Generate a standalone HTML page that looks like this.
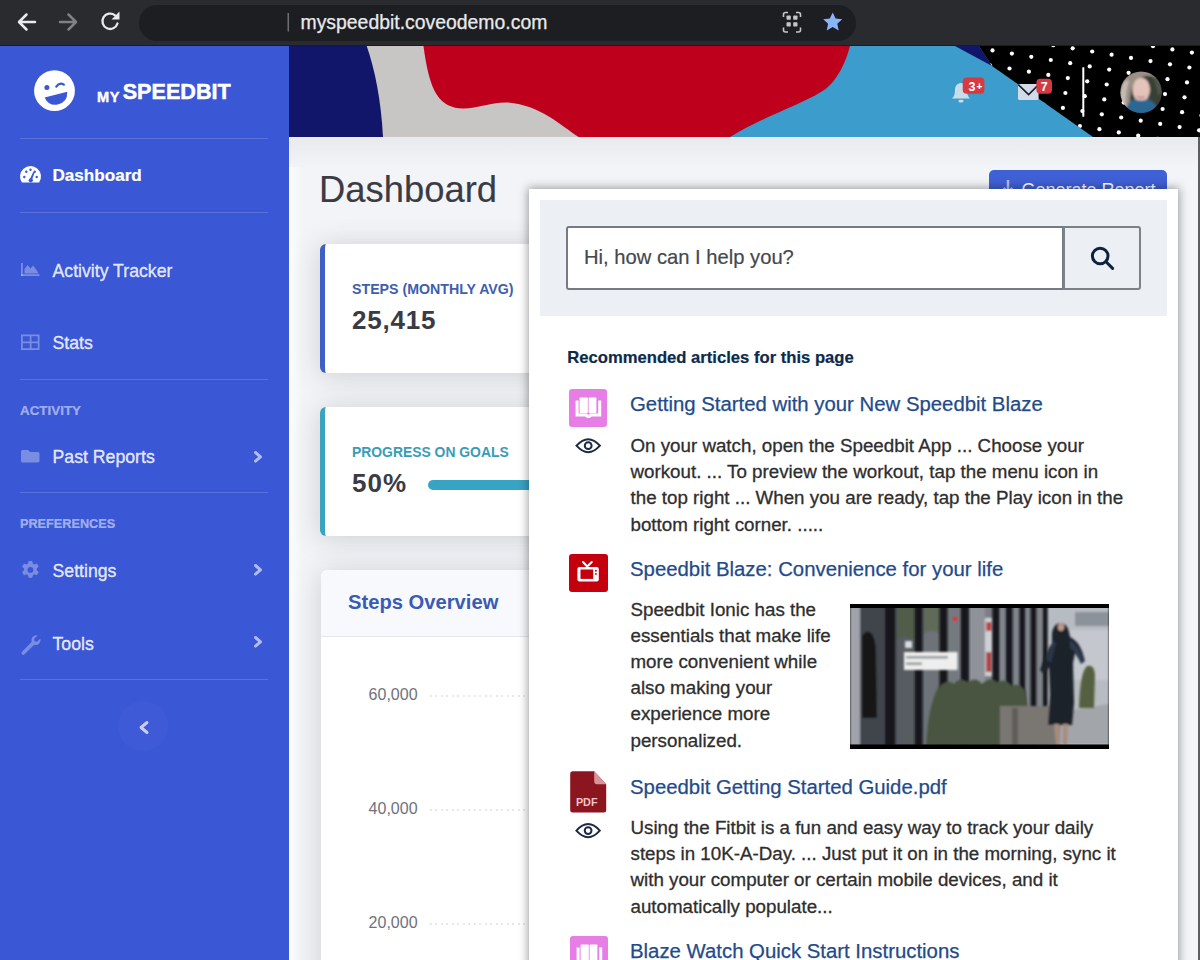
<!DOCTYPE html>
<html><head><meta charset="utf-8">
<style>
*{margin:0;padding:0;box-sizing:border-box}
html,body{width:1200px;height:960px;overflow:hidden;background:#f3f4f7;font-family:"Liberation Sans",sans-serif}
.a{position:absolute}
.t{position:absolute;white-space:nowrap;line-height:1}
#chrome{left:0;top:0;width:1200px;height:46px;background:#2a2b2e}
#pill{left:139px;top:4.5px;width:717px;height:36px;border-radius:18px;background:#1d1e21}
#side{left:0;top:46px;width:289px;height:914px;background:#3a57d6}
.div{position:absolute;left:20px;width:248px;height:1px;background:rgba(255,255,255,0.16)}
.nav{color:rgba(255,255,255,0.84);font-size:17.7px;-webkit-text-stroke:0.35px rgba(255,255,255,0.84)}
.sec{color:rgba(255,255,255,0.5);font-size:13px;font-weight:700;-webkit-text-stroke:0.2px rgba(255,255,255,0.5)}
.ic{position:absolute;fill:rgba(255,255,255,0.32)}
.chev{position:absolute;fill:none;stroke:rgba(255,255,255,0.55);stroke-width:2.6;stroke-linecap:round;stroke-linejoin:round}

.card{background:#fff;border-left:5px solid;border-radius:6px;box-shadow:0 2.4px 28px rgba(58,59,69,0.2)}
.axl{font-size:16px;color:#6f717d;margin-top:1px}
.dots{left:430px;width:110px;height:2px;background:repeating-linear-gradient(90deg,#e6e8ed 0 2px,transparent 2px 5.5px)}

.ttl{font-size:20.35px;color:#1f4b8a;-webkit-text-stroke:0.25px #1f4b8a}
.body{font-size:18.75px;line-height:26.2px;color:#2e2e2e;white-space:nowrap;-webkit-text-stroke:0.3px #2e2e2e}
</style></head><body>
<!-- browser chrome -->
<div id="chrome" class="a"></div>
<div id="pill" class="a"></div>
<div class="a" style="left:0;top:45px;width:1200px;height:1px;background:#1b1c22"></div>
<svg class="a" style="left:0;top:0" width="300" height="46" viewBox="0 0 300 46">
  <g fill="none" stroke="#e8eaed" stroke-width="2.5" stroke-linecap="round" stroke-linejoin="round">
    <path d="M35 22H19.5M26.5 14.5L19 22l7.5 7.5"/>
  </g>
  <g fill="none" stroke="#808184" stroke-width="2.5" stroke-linecap="round" stroke-linejoin="round">
    <path d="M60 22H75.5M68.5 14.5L76 22l-7.5 7.5"/>
  </g>
  <g fill="none" stroke="#e8eaed" stroke-width="2.3" stroke-linecap="round">
    <path d="M117.5 23.5A7.7 7.7 0 1 1 115 15.3"/>
  </g>
  <path d="M119.5 11.5v8h-8z" fill="#e8eaed"/>
  <rect x="287.5" y="13" width="1.5" height="18.5" fill="#6d6e71"/>
</svg>
<div class="t" style="left:300.5px;top:13px;font-size:19.4px;color:#e8eaed;-webkit-text-stroke:0.25px #e8eaed">myspeedbit.coveodemo.com</div>
<svg class="a" style="left:775px;top:5px" width="80" height="35" viewBox="775 5 80 35">
  <g fill="none" stroke="#c4c6c9" stroke-width="1.6">
    <path d="M783.5 17v-2.5a2 2 0 0 1 2-2h2.5M796 12.5h2.5a2 2 0 0 1 2 2V17M800.5 27.5V30a2 2 0 0 1-2 2H796M788 32h-2.5a2 2 0 0 1-2-2v-2.5"/>
  </g>
  <g fill="#c4c6c9"><rect x="786.5" y="15.5" width="4.3" height="4.3" rx="0.8"/><rect x="793.2" y="15.5" width="4.3" height="4.3" rx="0.8"/><rect x="786.5" y="22.2" width="4.3" height="4.3" rx="0.8"/><rect x="793.2" y="22.2" width="4.3" height="4.3" rx="0.8"/></g>
  <path d="M832.7 12.5l2.9 6.1 6.6.7-4.9 4.5 1.4 6.6-6-3.4-6 3.4 1.4-6.6-4.9-4.5 6.6-.7z" fill="#8ab4f8"/>
</svg>

<!-- sidebar -->
<div id="side" class="a"></div>
<svg class="a" style="left:30px;top:66px" width="50" height="50" viewBox="30 66 50 50">
  <circle cx="54.5" cy="90.7" r="20.4" fill="#fff"/>
  <circle cx="46.9" cy="87.6" r="2.5" fill="#3a57d6"/>
  <path d="M56.3 86.6Q59.8 82 63.8 84.6" fill="none" stroke="#3a57d6" stroke-width="2.3" stroke-linecap="round"/>
  <path d="M44.6 97.4L67.3 91.7Q67.6 102.5 57.5 104.6Q48.5 106 44.6 97.4z" fill="#3a57d6"/>
</svg>
<div class="t" style="left:97px;top:90px;font-size:14.6px;font-weight:700;color:#fff;letter-spacing:0.6px;-webkit-text-stroke:0.4px #fff">MY</div>
<div class="t" style="left:122.7px;top:80.7px;font-size:21.6px;font-weight:700;color:#fff;-webkit-text-stroke:0.5px #fff">SPEEDBIT</div>
<div class="div" style="top:137.5px"></div>
<div class="t" style="left:52.5px;top:167.25px;font-size:17.1px;font-weight:700;color:#fff;-webkit-text-stroke:0.2px #fff">Dashboard</div>
<div class="div" style="top:211.5px"></div>
<div class="t nav" style="left:52.5px;top:263.0px">Activity Tracker</div>
<div class="t nav" style="left:52.5px;top:335.0px">Stats</div>
<div class="div" style="top:378.5px"></div>
<div class="t sec" style="left:20px;top:404px;font-size:13.4px">ACTIVITY</div>
<div class="t nav" style="left:52.5px;top:449.0px">Past Reports</div>
<div class="div" style="top:492px"></div>
<div class="t sec" style="left:20px;top:518px;font-size:12.7px">PREFERENCES</div>
<div class="t nav" style="left:52.5px;top:563.0px">Settings</div>
<div class="t nav" style="left:52.5px;top:635.5px">Tools</div>
<div class="div" style="top:679px"></div>
<div class="a" style="left:117.5px;top:701px;width:50px;height:50px;border-radius:25px;background:rgba(255,255,255,0.025)"></div>
<svg class="a" style="left:0;top:150px" width="289" height="600" viewBox="0 150 289 600">
  <!-- dashboard gauge -->
  <path d="M21.9 182.5A10.5 10.5 0 1 1 39.1 182.5z" fill="#fff"/>
  <g fill="#3a57d6"><circle cx="24.3" cy="177" r="1.2"/><circle cx="26.3" cy="171.8" r="1.2"/><circle cx="36.7" cy="177" r="1.2"/><circle cx="30.5" cy="169.8" r="1.2"/><circle cx="34.7" cy="171.8" r="1.2"/><path d="M29.6 179.8l3.6-7.8 1.5.6-3 8z"/><circle cx="30.8" cy="180.3" r="2.1"/></g>
  <!-- activity area chart -->
  <g fill="rgba(255,255,255,0.32)"><rect x="21" y="263" width="1.8" height="13"/><rect x="21" y="274.2" width="18.5" height="1.8"/><path d="M24.5 273.5v-4.5l3-4 3 3.5 2.5-3 3.5 4.5 2 3.5z"/></g>
  <!-- stats table -->
  <g fill="rgba(255,255,255,0.32)"><path d="M21 334.5h18.5v15.5H21zM22.8 336.3v5.2h6.9v-5.2zm8.7 0v5.2h6.2v-5.2zm-8.7 7v5h6.9v-5zm8.7 0v5h6.2v-5z" fill-rule="evenodd"/></g>
  <!-- folder -->
  <path d="M21 451.5a1.5 1.5 0 0 1 1.5-1.5h5.5l2 2h8a1.5 1.5 0 0 1 1.5 1.5v7.5a1.5 1.5 0 0 1-1.5 1.5h-15.5a1.5 1.5 0 0 1-1.5-1.5z" fill="rgba(255,255,255,0.32)"/>
  <!-- gear -->
  <g transform="translate(30.4 569.9)" fill="rgba(255,255,255,0.32)">
    <path fill-rule="evenodd" d="M-1.8-8.9h3.6l.6 2.6 1.6.9 2.5-.9 1.8 3.1-2 1.8v1.8l2 1.8-1.8 3.1-2.5-.9-1.6.9-.6 2.6h-3.6l-.6-2.6-1.6-.9-2.5.9-1.8-3.1 2-1.8v-1.8l-2-1.8 1.8-3.1 2.5.9 1.6-.9zM0-2.9a2.9 2.9 0 1 0 0 5.8a2.9 2.9 0 1 0 0-5.8z"/>
  </g>
  <!-- wrench -->
  <path d="M37.5 635.5l-3.3 3.3.4 2.5 2.5.4 3.3-3.3a5 5 0 0 1-6.2 6.3l-9.6 9.6a1.8 1.8 0 0 1-2.6-2.6l9.6-9.6a5 5 0 0 1 5.9-6.6z" fill="rgba(255,255,255,0.32)"/>
  <!-- chevrons -->
  <g fill="none" stroke="rgba(255,255,255,0.6)" stroke-width="3" stroke-linecap="round" stroke-linejoin="round">
    <path d="M255.5 452.5l5 4.3-5 4.3M255.5 565.5l5 4.3-5 4.3M255.5 637.5l5 4.3-5 4.3"/>
    <path d="M147 722.5l-6 5 6 5" stroke="rgba(255,255,255,0.7)"/>
  </g>
</svg>

<!-- banner -->
<svg class="a" style="left:289px;top:46px" width="911" height="91" viewBox="0 0 911 91">
  <rect width="911" height="91" fill="#c8c5c5"/>
  <rect x="400" width="511" height="91" fill="#3c9ccb"/>
  <path d="M0 0H77.7C86 24 92 54 94 91H0z" fill="#12166a"/>
  <path d="M134.5 0H561C556 19 546 39 531 46.5C511 59 471 72 441 91H289.7C271 79 251 59 218.5 56.5C201 56 190 62.5 174 62.5C163 62.5 154 58 148 49C141 39 137 19 134.5 0z" fill="#bf001d"/>
  <path d="M666 0H690L703 20Z" fill="#12166a"/>
  <defs><clipPath id="bk"><path d="M690 0H911V91H804L703 20z"/></clipPath></defs>
  <path d="M690 0H911V91H804L703 20z" fill="#000"/>
  <g clip-path="url(#bk)" fill="#fff"><circle cx="664.5" cy="-2.0" r="2.1"/><circle cx="662.1" cy="12.9" r="2.1"/><circle cx="659.6" cy="27.8" r="2.1"/><circle cx="657.2" cy="42.7" r="2.1"/><circle cx="654.8" cy="57.6" r="2.1"/><circle cx="652.3" cy="72.5" r="2.1"/><circle cx="684.0" cy="1.2" r="2.1"/><circle cx="681.6" cy="16.1" r="2.1"/><circle cx="679.1" cy="31.0" r="2.1"/><circle cx="676.7" cy="45.9" r="2.1"/><circle cx="674.2" cy="60.8" r="2.1"/><circle cx="671.8" cy="75.7" r="2.1"/><circle cx="669.3" cy="90.6" r="2.1"/><circle cx="703.5" cy="4.4" r="2.1"/><circle cx="701.0" cy="19.3" r="2.1"/><circle cx="698.6" cy="34.2" r="2.1"/><circle cx="696.1" cy="49.1" r="2.1"/><circle cx="693.7" cy="64.0" r="2.1"/><circle cx="691.2" cy="78.9" r="2.1"/><circle cx="688.8" cy="93.8" r="2.1"/><circle cx="722.9" cy="7.6" r="2.1"/><circle cx="720.5" cy="22.5" r="2.1"/><circle cx="718.0" cy="37.4" r="2.1"/><circle cx="715.6" cy="52.3" r="2.1"/><circle cx="713.1" cy="67.2" r="2.1"/><circle cx="710.6" cy="82.1" r="2.1"/><circle cx="744.8" cy="-4.1" r="2.1"/><circle cx="742.3" cy="10.8" r="2.1"/><circle cx="739.9" cy="25.7" r="2.1"/><circle cx="737.5" cy="40.6" r="2.1"/><circle cx="735.0" cy="55.5" r="2.1"/><circle cx="732.5" cy="70.4" r="2.1"/><circle cx="730.1" cy="85.3" r="2.1"/><circle cx="764.2" cy="-0.9" r="2.1"/><circle cx="761.8" cy="14.0" r="2.1"/><circle cx="759.3" cy="28.9" r="2.1"/><circle cx="756.9" cy="43.8" r="2.1"/><circle cx="754.5" cy="58.7" r="2.1"/><circle cx="752.0" cy="73.6" r="2.1"/><circle cx="749.5" cy="88.5" r="2.1"/><circle cx="783.7" cy="2.3" r="2.1"/><circle cx="781.2" cy="17.2" r="2.1"/><circle cx="778.8" cy="32.1" r="2.1"/><circle cx="776.4" cy="47.0" r="2.1"/><circle cx="773.9" cy="61.9" r="2.1"/><circle cx="771.5" cy="76.8" r="2.1"/><circle cx="769.0" cy="91.7" r="2.1"/><circle cx="803.2" cy="5.5" r="2.1"/><circle cx="800.7" cy="20.4" r="2.1"/><circle cx="798.2" cy="35.3" r="2.1"/><circle cx="795.8" cy="50.2" r="2.1"/><circle cx="793.4" cy="65.1" r="2.1"/><circle cx="790.9" cy="80.0" r="2.1"/><circle cx="788.5" cy="94.9" r="2.1"/><circle cx="822.6" cy="8.7" r="2.1"/><circle cx="820.2" cy="23.6" r="2.1"/><circle cx="817.7" cy="38.5" r="2.1"/><circle cx="815.3" cy="53.4" r="2.1"/><circle cx="812.8" cy="68.3" r="2.1"/><circle cx="810.4" cy="83.2" r="2.1"/><circle cx="844.5" cy="-3.0" r="2.1"/><circle cx="842.0" cy="11.9" r="2.1"/><circle cx="839.6" cy="26.8" r="2.1"/><circle cx="837.1" cy="41.7" r="2.1"/><circle cx="834.7" cy="56.6" r="2.1"/><circle cx="832.2" cy="71.5" r="2.1"/><circle cx="829.8" cy="86.4" r="2.1"/><circle cx="864.0" cy="0.2" r="2.1"/><circle cx="861.5" cy="15.1" r="2.1"/><circle cx="859.0" cy="30.0" r="2.1"/><circle cx="856.6" cy="44.9" r="2.1"/><circle cx="854.2" cy="59.8" r="2.1"/><circle cx="851.7" cy="74.7" r="2.1"/><circle cx="849.2" cy="89.6" r="2.1"/><circle cx="883.4" cy="3.4" r="2.1"/><circle cx="881.0" cy="18.3" r="2.1"/><circle cx="878.5" cy="33.2" r="2.1"/><circle cx="876.0" cy="48.1" r="2.1"/><circle cx="873.6" cy="63.0" r="2.1"/><circle cx="871.2" cy="77.9" r="2.1"/><circle cx="868.7" cy="92.8" r="2.1"/><circle cx="902.9" cy="6.6" r="2.1"/><circle cx="900.4" cy="21.5" r="2.1"/><circle cx="898.0" cy="36.4" r="2.1"/><circle cx="895.5" cy="51.3" r="2.1"/><circle cx="893.1" cy="66.2" r="2.1"/><circle cx="890.6" cy="81.1" r="2.1"/><circle cx="915.0" cy="54.5" r="2.1"/><circle cx="912.5" cy="69.4" r="2.1"/><circle cx="910.1" cy="84.3" r="2.1"/></g>
  <rect x="793.3" y="21.3" width="2" height="49.4" fill="#fff"/>
</svg>


<!-- banner icons -->
<svg class="a" style="left:940px;top:70px" width="240" height="45" viewBox="940 70 240 45">
  <defs>
    <clipPath id="av"><circle cx="1141.1" cy="92.2" r="20.8"/></clipPath><filter id="avb" x="-10%" y="-10%" width="120%" height="120%"><feGaussianBlur stdDeviation="0.9"/></filter>
    <radialGradient id="face" cx="0.5" cy="0.45" r="0.5"><stop offset="0" stop-color="#e7b9a6"/><stop offset="1" stop-color="#c79a88"/></radialGradient>
  </defs>
  <!-- bell -->
  <path d="M952 98.5h18c-2.5-2-3-5-3-9.5a6 6 0 0 0-12 0c0 4.5-.5 7.5-3 9.5z" fill="#c9dde9"/>
  <rect x="958.5" y="99.8" width="5" height="2.6" rx="1.3" fill="#c9dde9"/>
  <rect x="962.7" y="77.6" width="21.7" height="16.2" rx="4" fill="#d63a40"/>
  <text x="968.5" y="90.5" font-family="Liberation Sans" font-weight="700" font-size="12.5" fill="#fff">3</text><text x="976.5" y="89.5" font-family="Liberation Sans" font-weight="700" font-size="10" fill="#fff">+</text>
  <!-- envelope -->
  <rect x="1018" y="84" width="20.6" height="16" rx="1.5" fill="#d3dbe7"/>
  <path d="M1018.3 84.6L1028.6 94.6L1038.6 84.6" fill="none" stroke="#1a1d2e" stroke-width="1.6"/>
  <rect x="1036.4" y="78.7" width="15.6" height="15.1" rx="4" fill="#d63a40"/>
  <text x="1044.2" y="90.8" font-family="Liberation Sans" font-weight="700" font-size="12.5" fill="#fff" text-anchor="middle">7</text>
  <!-- avatar -->
  <g clip-path="url(#av)">
    <g filter="url(#avb)">
    <rect x="1118" y="70" width="46" height="45" fill="#394036"/>
    <path d="M1153 72q8 6 9 20l-4 3q-2-14-6-18z" fill="#4f574a"/>
    <path d="M1119 112q-2-24 6-34q8-9 19-8q9 1 13 8q-6-3-12-2q-9 2-13 12q-3 10-2 24z" fill="#9b8f86"/>
    <path d="M1120 108q-1-18 4-26q3-3 5-1q-4 12-3 27z" fill="#c4bbb3"/>
    <ellipse cx="1141.2" cy="89.8" rx="8.8" ry="12" fill="#e4c4ba"/>
    <path d="M1137 96.5q3.8 2.2 7.6 0" stroke="#c7817e" stroke-width="1.6" fill="none"/>
    <path d="M1124 116q2-13 10-17q7 3 14 0q9 4 12 17z" fill="#2b6893"/>
    </g>
  </g>
</svg>

<!-- main content -->
<div class="a" style="left:289px;top:137px;width:14px;height:823px;background:linear-gradient(90deg,rgba(255,255,255,0.75),rgba(255,255,255,0))"></div>
<div class="a" style="left:289px;top:137px;width:911px;height:30px;background:linear-gradient(#e9eaee,#f3f4f7)"></div>
<div class="t" style="left:319px;top:171.7px;font-size:36.4px;color:#3a3b45;-webkit-text-stroke:0.12px #3a3b45">Dashboard</div>
<div class="a" style="left:989px;top:170px;width:178px;height:40px;border-radius:5px;background:#4060d6"></div>
<div class="t" style="left:1021.5px;top:180.5px;font-size:18px;color:#fff">Generate Report</div>
<svg class="a" style="left:1000px;top:178px" width="16" height="20"><path d="M8 2v12M3.5 10l4.5 4.5 4.5-4.5" stroke="rgba(255,255,255,0.6)" stroke-width="2.5" fill="none"/></svg>

<div class="a card" style="left:320px;top:243.5px;width:260px;height:129.5px;border-left-color:#3f5fc4"></div>
<div class="t" style="left:352px;top:282.3px;font-size:14.2px;font-weight:700;color:#3f5eb0">STEPS (MONTHLY AVG)</div>
<div class="t" style="left:352px;top:307px;font-size:26px;font-weight:700;color:#3a3b45;letter-spacing:0.8px">25,415</div>

<div class="a card" style="left:320px;top:407px;width:260px;height:129px;border-left-color:#3aa3bf"></div>
<div class="t" style="left:352px;top:445.6px;font-size:13.9px;font-weight:700;color:#3a9cb6">PROGRESS ON GOALS</div>
<div class="t" style="left:352px;top:470px;font-size:26px;font-weight:700;color:#3a3b45;letter-spacing:1px">50%</div>
<div class="a" style="left:428px;top:480px;width:140px;height:9.5px;border-radius:5px;background:#38a4c4"></div>

<div class="a" style="left:321px;top:570px;width:260px;height:420px;border-radius:6px;background:#fff;box-shadow:0 2.4px 28px rgba(58,59,69,0.2)"></div>
<div class="a" style="left:321px;top:570px;width:260px;height:67px;border-radius:6px 6px 0 0;background:#f8f9fc;border-bottom:1px solid #e3e6f0"></div>
<div class="t" style="left:348px;top:591.9px;font-size:20.2px;font-weight:700;color:#3a5bb5">Steps Overview</div>
<div class="t axl" style="left:368.6px;top:686.4px">60,000</div>
<div class="t axl" style="left:368.6px;top:800.4px">40,000</div>
<div class="t axl" style="left:368.6px;top:914.4px">20,000</div>
<div class="a dots" style="top:694.5px"></div>
<div class="a dots" style="top:808.5px"></div>
<div class="a dots" style="top:922.5px"></div>

<div class="a" style="left:1198.3px;top:137px;width:1.7px;height:823px;background:#5c5d60"></div>
<!-- popup -->
<div class="a" style="left:529.4px;top:189px;width:648.6px;height:800px;background:#fff;box-shadow:0 0 9px 1px rgba(0,0,0,0.38)"></div>
<div class="a" style="left:540.4px;top:200px;width:626.6px;height:116px;background:#eceff3"></div>
<div class="a" style="left:566px;top:226px;width:498px;height:64px;background:#fff;border:2px solid #767a82;border-radius:3px 0 0 3px"></div>
<div class="a" style="left:1062.5px;top:226px;width:78.5px;height:64px;background:#eceff3;border:2px solid #7d8188;border-radius:0 3px 3px 0"></div>
<svg class="a" style="left:1085px;top:240px" width="35" height="35" viewBox="1085 240 35 35"><circle cx="1100.2" cy="256" r="7.8" fill="none" stroke="#0c2340" stroke-width="3"/><path d="M1106 261.8l6.6 6.6" stroke="#0c2340" stroke-width="3" stroke-linecap="round"/></svg>
<div class="t" style="left:584px;top:246.5px;font-size:20.2px;color:#45484d;-webkit-text-stroke:0.2px #45484d">Hi, how can I help you?</div>

<div class="t" style="left:567.3px;top:349.9px;font-size:16.64px;font-weight:700;color:#0c2a4b;-webkit-text-stroke:0.2px #0c2a4b">Recommended articles for this page</div>

<div class="a" style="left:568.7px;top:388.7px;width:38.7px;height:38.7px;border-radius:3px;background:#e77ee6"></div>
<svg class="a" style="left:568.7px;top:388.7px" width="39" height="38" viewBox="0 0 39 38"><g fill="#fff"><path d="M6.6 11.5h3v13h7.5q1.6 0 2.3 1.6q.7-1.6 2.3-1.6h7.5v-13h3v16h-9.2q-1.5 0-2.1 1.5h-3q-.6-1.5-2.1-1.5H6.6z"/><rect x="10.6" y="8.6" width="8.2" height="15.6" rx="0.6"/><rect x="19.6" y="8.6" width="7.8" height="15.6" rx="0.6"/></g></svg>
<div class="t ttl" style="left:630px;top:394.1px">Getting Started with your New Speedbit Blaze</div>
<svg class="a" style="left:570px;top:433px" width="36" height="26" viewBox="570 433 36 26"><path d="M576.5 445.7Q588.2 432.6 599.9 445.7Q588.2 458.8 576.5 445.7z" fill="none" stroke="#1c2b42" stroke-width="2"/><circle cx="588.2" cy="445.7" r="3.4" fill="none" stroke="#1c2b42" stroke-width="2"/></svg>
<div class="a body" style="left:630.5px;top:432.9px">On your watch, open the Speedbit App ... Choose your<br>workout. ... To preview the workout, tap the menu icon in<br>the top right ... When you are ready, tap the Play icon in the<br>bottom right corner. .....</div>

<div class="a" style="left:569px;top:553.5px;width:38.5px;height:38.5px;border-radius:3px;background:#c4000f"></div>
<svg class="a" style="left:565px;top:550px" width="45" height="45" viewBox="565 550 45 45"><path d="M583 562l4.2 4.5 4.6-4.5" fill="none" stroke="#fff" stroke-width="2" stroke-linecap="round"/><rect x="577.4" y="567" width="21.4" height="14.5" rx="2" fill="#fff"/><rect x="580.5" y="569.5" width="12.7" height="9.4" fill="#c4000f"/><circle cx="595.9" cy="570.8" r="0.95" fill="#c4000f"/><circle cx="595.9" cy="573.9" r="0.95" fill="#c4000f"/></svg>
<div class="t ttl" style="left:630px;top:559px">Speedbit Blaze: Convenience for your life</div>
<div class="a body" style="left:630.5px;top:596.65px">Speedbit Ionic has the<br>essentials that make life<br>more convenient while<br>also making your<br>experience more<br>personalized.</div>
<svg class="a" style="left:850px;top:604px" width="259" height="145" viewBox="850 604 259 145">
  <defs>
    <filter id="bl" x="-5%" y="-5%" width="110%" height="110%"><feGaussianBlur stdDeviation="0.9"/></filter>
  </defs>
  <rect x="850" y="604" width="259" height="145" fill="#000"/>
  <g filter="url(#bl)">
  <rect x="850" y="606" width="259" height="140" fill="#6a6f76"/>
  <rect x="850" y="606" width="10" height="140" fill="#a0a3aa"/>
  <rect x="860" y="606" width="24" height="140" fill="#40454b"/>
  <path d="M862 636q5-8 10-2q4 6 4 20l1 64h-15z" fill="#121316"/>
  <rect x="896" y="606" width="20" height="140" fill="#565c60"/>
  <path d="M896 606h20v35q-10-8-20-2z" fill="#4f5d48"/>
  <rect x="923" y="606" width="17" height="140" fill="#6e7379"/>
  <path d="M923 606h17v28q-8-6-17 0z" fill="#5e6a58"/>
  <rect x="947" y="606" width="14" height="140" fill="#757a80"/>
  <rect x="969" y="606" width="16" height="140" fill="#8f9299"/>
  <rect x="985" y="606" width="8" height="140" fill="#7b7f86"/>
  <rect x="985" y="618" width="8" height="58" fill="#cdd0d4"/>
  <rect x="986" y="622" width="6" height="9" fill="#b8464a"/>
  <rect x="986" y="652" width="6" height="20" fill="#b04448"/>
  <rect x="999" y="606" width="48" height="140" fill="#80858c"/>
  <rect x="1047" y="606" width="62" height="140" fill="#b7bbc2"/>
  <rect x="1075" y="612" width="34" height="14" fill="#8c929a"/>
  <rect x="1060" y="630" width="49" height="50" fill="#c4c8ce"/>
  <circle cx="955" cy="619" r="3" fill="#b94a4a"/>
  <path d="M1040 744l10-30 59-10v40z" fill="#a2a5aa"/>
  </g>
  <g fill="#18191d" filter="url(#bl)">
    <rect x="884.4" y="606" width="11.2" height="140"/>
    <rect x="914.8" y="606" width="7.8" height="140"/>
    <rect x="939.5" y="606" width="7.9" height="140"/>
    <rect x="960.9" y="606" width="7.9" height="140"/>
    <rect x="992.4" y="606" width="6.7" height="140"/>
    <rect x="1005.9" y="606" width="6.7" height="140"/>
    <rect x="1019.4" y="606" width="5.6" height="140"/>
    <rect x="1030.6" y="606" width="5.7" height="140"/>
    <rect x="1043" y="606" width="4.5" height="110"/>
  </g>
  <g filter="url(#bl)">
  <path d="M926 746q2-40 12-58q8-10 16-4q6-8 14-2q8-6 14 2q8-8 16-2q8-4 14 4q8-4 14 6l6 54z" fill="#4a5540"/>
  <path d="M1079 708q1-36 8-42q7-2 8 8l-1 34z" fill="#55603f"/>
  <path d="M1000 746v-40h60v40z" fill="#7a7773"/>
  <rect x="1012" y="708" width="6" height="38" fill="#5f5d5a"/>
  <rect x="904" y="652" width="53.5" height="18" fill="#eeeeee"/>
  <rect x="906" y="656" width="42" height="2.5" fill="#8f959b"/>
  <rect x="906" y="662.5" width="16" height="2.5" fill="#8f959b"/>
  <rect x="905" y="641" width="7" height="7" fill="#d9dce0"/>
  <path d="M1052 634q1-10 8-11q7 0 9 9l1 5q8 4 12 14l3 10-4 2-6-10-2 10 1 40-2 22h-24l2-30-1-28-6 6-3-3 8-20q2-5 4-6z" fill="#1c2029"/>
  <path d="M1046 660l7-20 3 3-5 20z" fill="#2c3648"/>
  <path d="M1070 640q10 6 14 22l-3 2q-5-12-11-16z" fill="#2e3a50"/>
  <ellipse cx="1061" cy="627" rx="3.2" ry="4" fill="#bb9a88"/>
  <path d="M1054 724h5l1 21h-4zM1063 724h5l-1 21h-4z" fill="#a88c7e"/>
  </g>
  <rect x="850" y="604" width="259" height="4" fill="#000"/>
  <rect x="850" y="744.5" width="259" height="4.5" fill="#000"/>
</svg>

<svg class="a" style="left:570px;top:770.5px" width="37" height="42" viewBox="0 0 37 42"><path d="M2.5 0.3H24.2L36.2 13.2V39a2.5 2.5 0 0 1-2.5 2.5H2.7A2.5 2.5 0 0 1 .2 39V2.8A2.5 2.5 0 0 1 2.5.3z" fill="#8c1620"/><path d="M24.2 .3V10.8a2.4 2.4 0 0 0 2.4 2.4H36.2z" fill="#d9939a"/><text x="16.7" y="35.3" font-family="Liberation Sans" font-weight="700" font-size="10.8" fill="#f2c6ca" text-anchor="middle">PDF</text></svg>
<div class="t ttl" style="left:630px;top:776.5px">Speedbit Getting Started Guide.pdf</div>
<svg class="a" style="left:570px;top:818px" width="36" height="26" viewBox="570 818 36 26"><path d="M576.4 830.6Q588.1 817.5 599.8 830.6Q588.1 843.7 576.4 830.6z" fill="none" stroke="#1c2b42" stroke-width="2"/><circle cx="588.1" cy="830.6" r="3.4" fill="none" stroke="#1c2b42" stroke-width="2"/></svg>
<div class="a body" style="left:630.5px;top:814.9px">Using the Fitbit is a fun and easy way to track your daily<br>steps in 10K-A-Day. ... Just put it on in the morning, sync it<br>with your computer or certain mobile devices, and it<br>automatically populate...</div>

<div class="a" style="left:569.5px;top:936.25px;width:38.7px;height:38.7px;border-radius:3px;background:#e77ee6"></div>
<svg class="a" style="left:569.5px;top:936.25px" width="39" height="38" viewBox="0 0 39 38"><g fill="#fff"><path d="M6.6 11.5h3v13h7.5q1.6 0 2.3 1.6q.7-1.6 2.3-1.6h7.5v-13h3v16h-9.2q-1.5 0-2.1 1.5h-3q-.6-1.5-2.1-1.5H6.6z"/><rect x="10.6" y="8.6" width="8.2" height="15.6" rx="0.6"/><rect x="19.6" y="8.6" width="7.8" height="15.6" rx="0.6"/></g></svg>
<div class="t ttl" style="left:630px;top:941.3px">Blaze Watch Quick Start Instructions</div>
</body></html>
